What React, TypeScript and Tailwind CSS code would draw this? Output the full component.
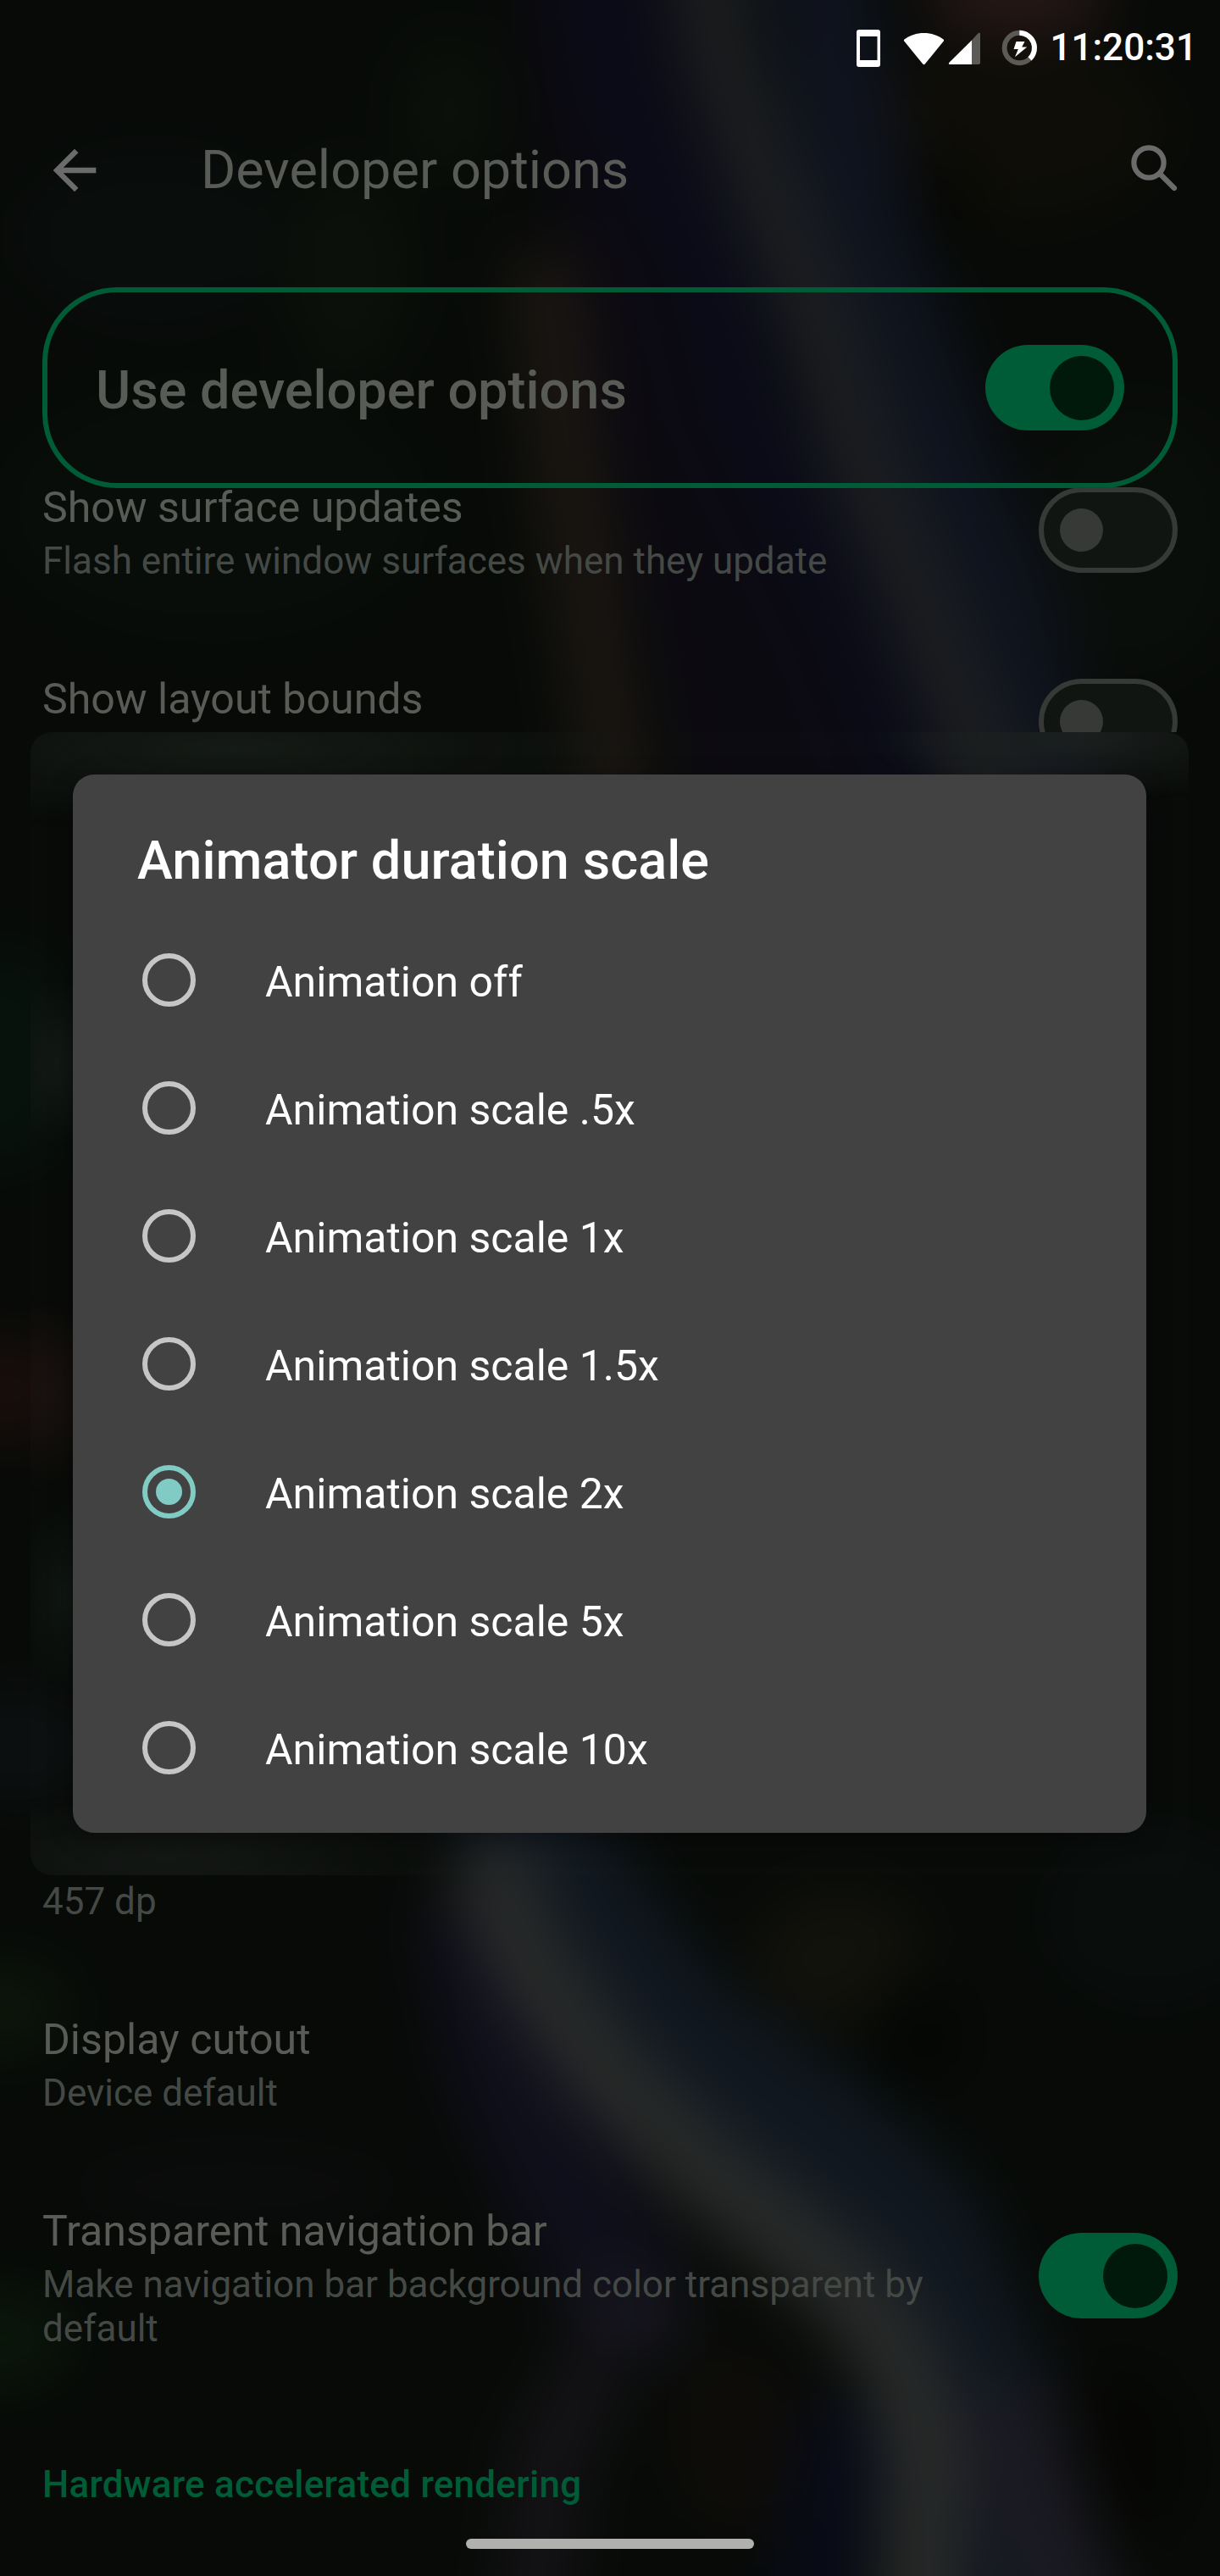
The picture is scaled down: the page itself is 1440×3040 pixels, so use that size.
import React from "react";

type Streak = { d: string; color: string; width: number };

const STREAKS: Streak[] = [
  { d: "M700 -150 L740 150 L790 400 L850 650 L930 1010", color: "#0c0a11", width: 200 },
  { d: "M690 -150 L730 100 L840 320 L880 480 L1000 720 L1110 1010", color: "#0a0b17", width: 110 },
  { d: "M640 300 L670 560 L705 780 L740 1010", color: "#1b1612", width: 84 },
  { d: "M950 -150 L985 80 L1020 270 L1080 450 L1170 680 L1260 1010", color: "#0f131e", width: 120 },
  { d: "M820 -150 L850 60 L900 210 L965 370 L1020 550 L1090 720 L1160 900 L1190 1010", color: "#1b1d1f", width: 92 },
  { d: "M560 2240 L600 2430 L660 2570 L740 2700", color: "#0f0f1b", width: 140 },
  { d: "M740 2680 L745 2780", color: "#16151e", width: 130 },
  { d: "M710 2790 L650 2890 L620 3190", color: "#141216", width: 90 },
  { d: "M560 2060 L680 2240 L800 2400 L980 2530 L1090 2640 L1160 2820 L1200 3190", color: "#10171f", width: 150 },
  { d: "M1180 2820 L1220 2960 L1300 3190", color: "#1a1a22", width: 120 },
  { d: "M1000 2840 L940 3190", color: "#080b17", width: 100 },
  { d: "M570 2180 L620 2310 L710 2440 L830 2560 L920 2630 L1010 2710 L1065 2790 L1090 2900 L1085 3190", color: "#282a29", width: 96 },
];

type Blob = { cx: number; cy: number; rx: number; ry: number; color: string };

const BLOBS: Blob[] = [
  { cx: 0, cy: 1640, rx: 90, ry: 60, color: "#190e0c" },
  { cx: 0, cy: 1250, rx: 90, ry: 130, color: "#07120d" },
  { cx: 20, cy: 2060, rx: 90, ry: 60, color: "#0c1011" },
  { cx: 0, cy: 2370, rx: 80, ry: 50, color: "#0d160b" },
  { cx: 0, cy: 2760, rx: 80, ry: 50, color: "#0b180b" },
  { cx: 410, cy: 320, rx: 80, ry: 130, color: "#0b100a" },
  { cx: 530, cy: 130, rx: 60, ry: 90, color: "#0b100a" },
  { cx: 180, cy: 280, rx: 160, ry: 100, color: "#090d0c" },
  { cx: 250, cy: 600, rx: 260, ry: 160, color: "#080d0a" },
  { cx: 1200, cy: -10, rx: 110, ry: 50, color: "#271818" },
  { cx: 1200, cy: 150, rx: 180, ry: 110, color: "#0e0d08" },
  { cx: 1100, cy: 240, rx: 50, ry: 60, color: "#060703" },
  { cx: 1340, cy: 640, rx: 120, ry: 160, color: "#0a0e0b" },
  { cx: 990, cy: 2310, rx: 100, ry: 80, color: "#12120c" },
  { cx: 1360, cy: 2260, rx: 120, ry: 100, color: "#090e0d" },
  { cx: 1080, cy: 2400, rx: 50, ry: 70, color: "#030603" },
  { cx: 870, cy: 2880, rx: 80, ry: 110, color: "#0e0c09" },
  { cx: 1320, cy: 2900, rx: 80, ry: 110, color: "#060704" },
  { cx: 280, cy: 2580, rx: 200, ry: 60, color: "#0a0b0b" },
];

function Wallpaper() {
  return (
    <svg className="absolute inset-0" width="1440" height="3040" viewBox="0 0 1440 3040" aria-hidden="true">
      <defs>
        <filter id="soft" filterUnits="userSpaceOnUse" x="-200" y="-200" width="1840" height="3440" colorInterpolationFilters="sRGB">
          <feGaussianBlur stdDeviation="34" />
        </filter>
      </defs>
      <g filter="url(#soft)">
        <rect x="-200" y="-200" width="1840" height="3440" fill="#070a07" />
        {BLOBS.map((b, i) => (
          <ellipse key={i} cx={b.cx} cy={b.cy} rx={b.rx} ry={b.ry} fill={b.color} />
        ))}
        {STREAKS.map((s, i) => (
          <path key={i} d={s.d} stroke={s.color} strokeWidth={s.width} strokeLinejoin="round" fill="none" />
        ))}
      </g>
    </svg>
  );
}

function StatusBar() {
  return (
    <div className="flex h-[116px] items-start justify-end pr-[27px]">
      <svg className="mt-[30px]" width="220" height="54" viewBox="1010 30 220 54" aria-hidden="true">
        <path
          fillRule="evenodd"
          fill="#fff"
          d="M1015 35h22a3 3 0 0 1 3 3v38a3 3 0 0 1-3 3h-22a3 3 0 0 1-3-3v-38a3 3 0 0 1 3-3zM1016 43v28h20.500v-28z"
        />
        <path
          fill="#fff"
          d="M1068.500 46.500C1075 41.500 1083 39 1091.500 39s16.500 2.500 23 7.500a1.500 1.500 0 0 1 .3 2L1093 75.300a2 2 0 0 1-3 0L1068.200 48.500a1.500 1.500 0 0 1 .3-2z"
        />
        <path fill="#5c5a57" d="M1148 47.500l7.500-8.200c1-1 2.500-.5 2.500.8V74a2 2 0 0 1-2 2h-8z" />
        <path fill="#fff" d="M1148 47.500V76h-26c-1.200 0-1.500-1-.8-2z" />
        <circle cx="1204.300" cy="56.500" r="17.700" fill="none" stroke="#5c5a57" strokeWidth="5.900" />
        <path d="M1204.300 38.800A17.700 17.700 0 0 1 1216.500 69.300" fill="none" stroke="#fff" strokeWidth="5.900" />
        <path fill="#fff" d="M1200.500 49h10l-3.300 6.500h6L1199 67.300l3.800-9.300h-5.300z" />
      </svg>
      <div className="ml-[10px] mt-[30px] text-[44.1px] font-medium leading-[52px] text-white">11:20:31</div>
    </div>
  );
}

function Toggle({ on }: { on?: boolean }) {
  return on ? (
    <div className="flex h-[101px] w-[164px] shrink-0 items-center justify-end rounded-full bg-[#005c37] pr-[12.500px]">
      <div className="size-[76px] rounded-full bg-[#00190b]" />
    </div>
  ) : (
    <div className="flex h-[101px] w-[164px] shrink-0 items-center rounded-full border-[6px] border-[#363935] bg-[#111512] pl-[19px]">
      <div className="size-[51px] rounded-full bg-[#363935]" />
    </div>
  );
}

function Item({ title, summary }: { title?: string; summary?: string }) {
  return (
    <div className="w-[1080px]">
      {title && <div className="text-[50.1px] leading-[60px] text-[#585b56]">{title}</div>}
      {summary && <div className="mt-[7px] text-[44px] leading-[52px] text-[#444945]">{summary}</div>}
    </div>
  );
}

const OPTIONS = [
  "Animation off",
  "Animation scale .5x",
  "Animation scale 1x",
  "Animation scale 1.5x",
  "Animation scale 2x",
  "Animation scale 5x",
  "Animation scale 10x",
];

function Dialog() {
  return (
    <div className="absolute left-[36px] top-[864px] h-[1349px] w-[1367px] overflow-hidden rounded-[25px] bg-[#8a958c]/1">
      <div className="absolute inset-0 bg-[radial-gradient(ellipse_520px_100px_at_240px_20px,#181d19,transparent),radial-gradient(ellipse_260px_80px_at_1240px_5px,#1e2220,transparent),radial-gradient(ellipse_360px_80px_at_160px_1330px,#171b18,transparent),radial-gradient(ellipse_60px_100px_at_30px_390px,#151a15,transparent),radial-gradient(ellipse_60px_120px_at_20px_780px,#181210,transparent),radial-gradient(ellipse_60px_120px_at_40px_1020px,#121813,transparent)] opacity-90" />
      <div className="absolute left-[50px] top-[50px] h-[1249px] w-[1267px] rounded-[25px] bg-[#424242] pl-[76px] shadow-[0_8px_30px_rgba(0,0,0,0.3)]">
        <h2 className="pt-[65px] text-[63px] font-medium leading-[74px] tracking-[0.08px] text-white">Animator duration scale</h2>
        <ul className="mt-[28px]">
          {OPTIONS.map((o) => (
            <li key={o} className="flex h-[151px] items-center">
              {o === "Animation scale 2x" ? (
                <div className="ml-[6px] flex size-[63px] items-center justify-center rounded-full border-[6.3px] border-[#80cbc4]">
                  <div className="size-[31px] rounded-full bg-[#80cbc4]" />
                </div>
              ) : (
                <div className="ml-[6px] size-[63px] rounded-full border-[6.3px] border-[#c6c6c6]" />
              )}
              <span className="ml-[82px] mt-[4px] text-[50px] leading-[60px] text-white">{o}</span>
            </li>
          ))}
        </ul>
      </div>
    </div>
  );
}

export default function App() {
  return (
    <div className="relative h-[3040px] w-[1440px] overflow-hidden bg-[#070a07] font-['Roboto',sans-serif]">
      <Wallpaper />
      <div className="relative flex h-full flex-col">
        <StatusBar />
        <header className="flex h-[170px] items-center pl-[50px]">
          <svg width="76" height="76" viewBox="0 0 24 24" fill="#6b6b6b" aria-hidden="true">
            <path d="M20 11H7.830l5.590-5.590L12 4l-8 8 8 8 1.410-1.410L7.830 13H20v-2z" />
          </svg>
          <h1 className="ml-[111px] text-[63px] leading-[74px] text-[#585b56]">Developer options</h1>
          <svg className="mb-1 ml-auto mr-[46px]" width="62" height="62" viewBox="1332 168 62 62" fill="none" stroke="#6b6b6b" strokeWidth="6.200" strokeLinecap="round" aria-hidden="true">
            <circle cx="1356" cy="192" r="17.600" />
            <path d="M1369.500 205.500L1386 222" />
          </svg>
        </header>
        <section className="mx-[50px] mt-[53px] flex h-[237px] items-center justify-between rounded-[88px] border-[6px] border-[#005c37] pl-[57px] pr-[57px]">
          <div className="mt-[6px] text-[63px] font-medium leading-[74px] text-[#585b56]">Use developer options</div>
          <Toggle on />
        </section>
        <div className="flex flex-col pl-[50px] pr-[50px]">
          <div className="-mt-px flex h-[226px] items-start justify-between">
            <div className="-mt-[6px]">
              <Item title="Show surface updates" summary="Flash entire window surfaces when they update" />
            </div>
            <Toggle />
          </div>
          <div className="flex h-[63px] items-start justify-between">
            <div className="-mt-[6px]">
              <Item title="Show layout bounds" />
            </div>
            <div className="h-[63px] shrink-0 overflow-hidden">
              <Toggle />
            </div>
          </div>
          <div className="mt-[1347px]">
            <Item summary="457 dp" />
          </div>
          <div className="mt-[107px]">
            <Item title="Display cutout" summary="Device default" />
          </div>
          <div className="mt-[107px] flex items-center justify-between">
            <Item title="Transparent navigation bar" summary="Make navigation bar background color transparent by default" />
            <div className="mb-[6px]">
              <Toggle on />
            </div>
          </div>
          <div className="mt-[132px] text-[44px] font-medium leading-[52px] tracking-[0.24px] text-[#005c37]">Hardware accelerated rendering</div>
        </div>
      </div>
      <Dialog />
      <div className="absolute left-[550px] top-[2996px] h-[12px] w-[340px] rounded-full bg-[#b0b0ae]" />
    </div>
  );
}
